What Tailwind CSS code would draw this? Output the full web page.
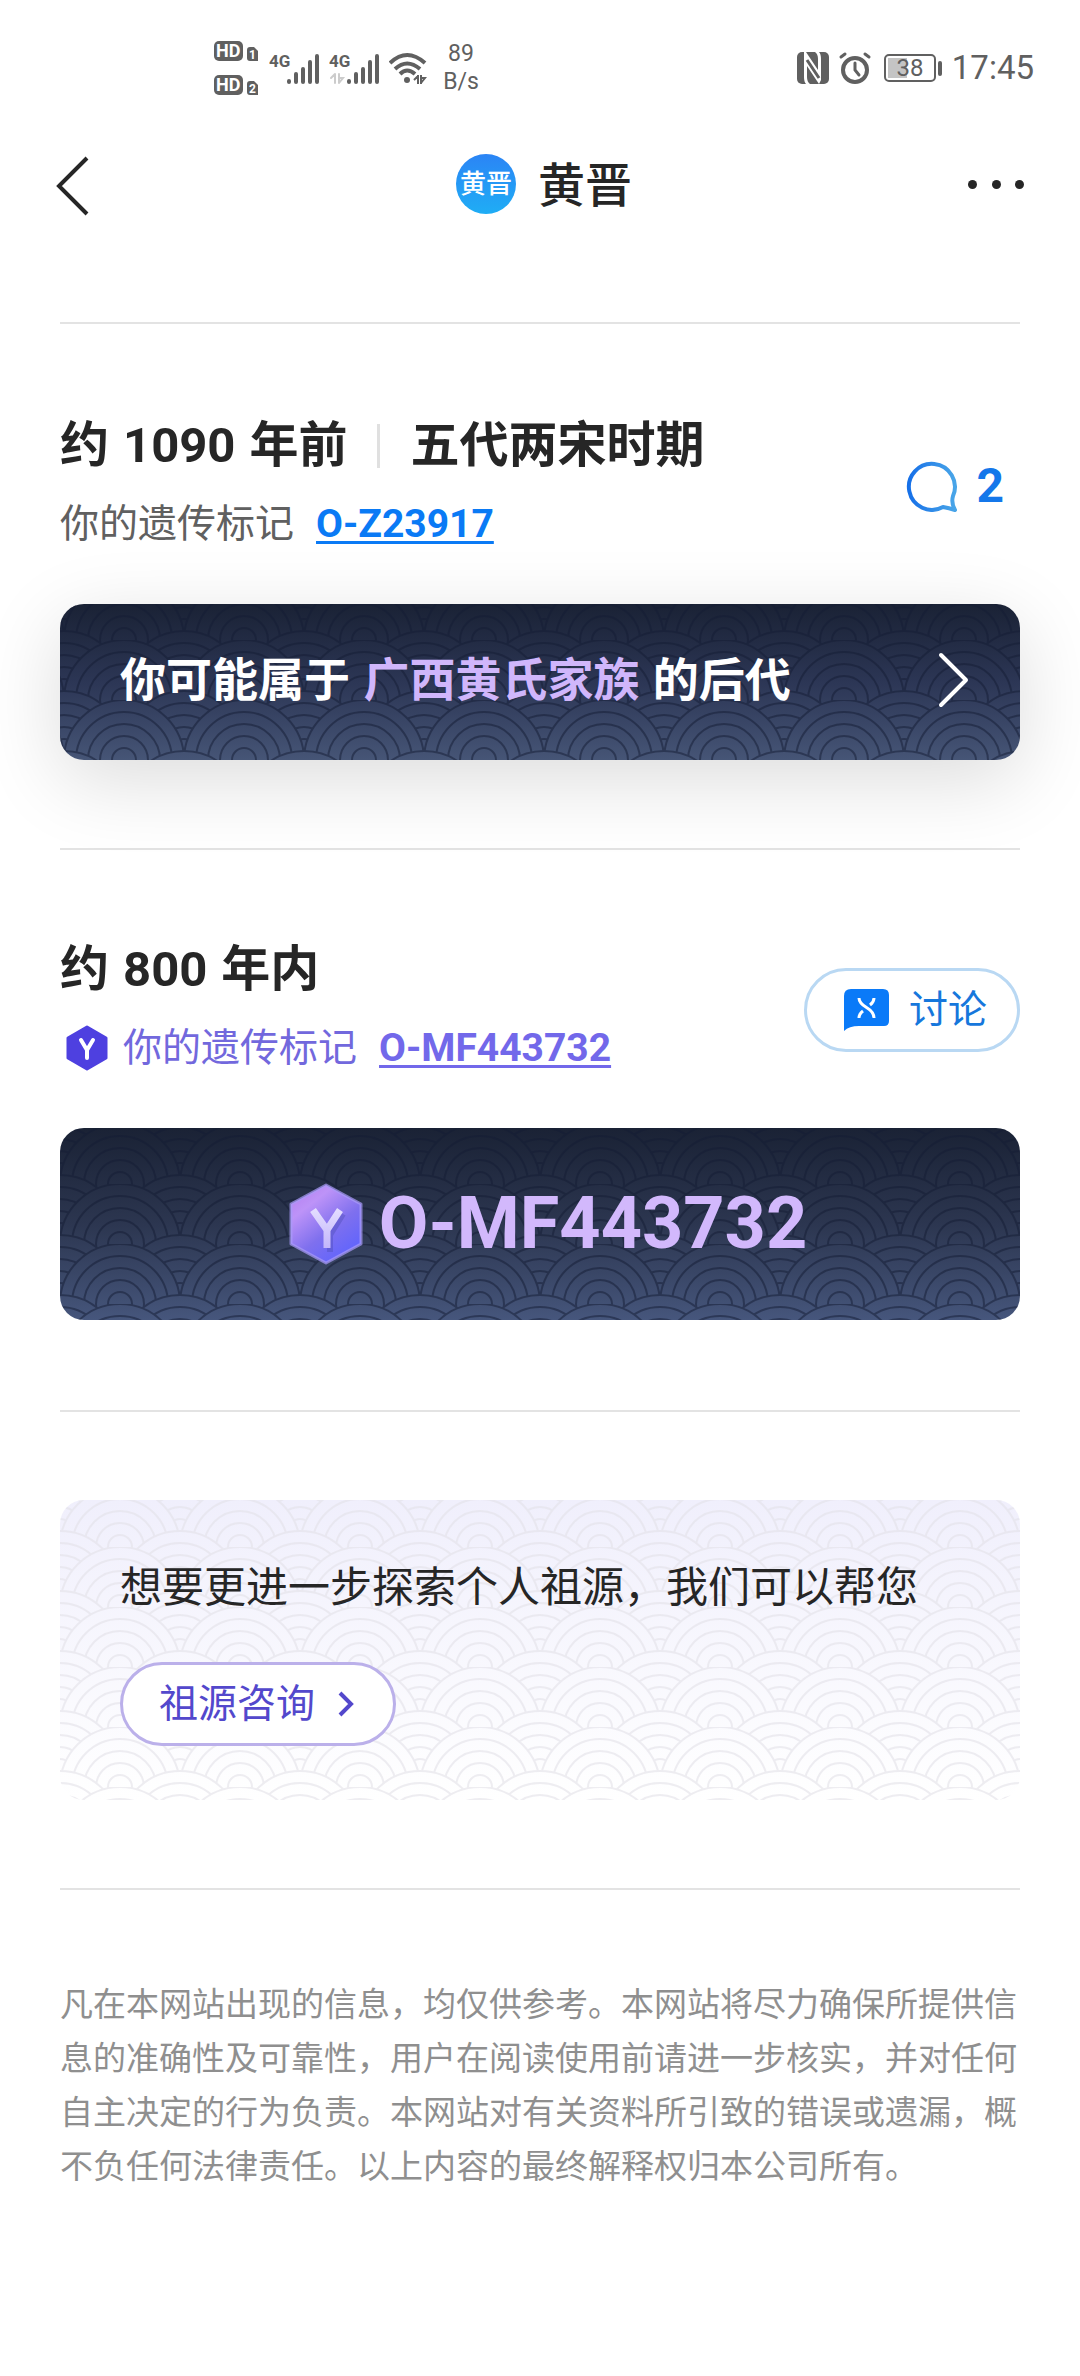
<!DOCTYPE html>
<html lang="zh-CN">
<head>
<meta charset="utf-8">
<meta name="viewport" content="width=device-width, initial-scale=1">
<title>黄晋</title>
<script src="https://cdn.jsdelivr.net/npm/@tailwindcss/browser@4"></script>
</head>
<body class="min-h-screen bg-white font-[Roboto,'Noto_Sans_CJK_SC',sans-serif] text-[#262626]">

<!-- Shared wave patterns and masks -->
<svg class="absolute size-0" aria-hidden="true">
  <defs>
    <g id="wave">
      <circle r="60"/><circle r="48"/><circle r="36"/><circle r="24"/><circle r="12"/>
    </g>
    <pattern id="wavesDark" width="120" height="60" patternUnits="userSpaceOnUse">
      <g fill="#000" stroke="#fff" stroke-width="2">
        <use href="#wave" x="60" y="-9"/>
        <use href="#wave" x="0" y="0"/><use href="#wave" x="120" y="0"/>
        <use href="#wave" x="60" y="51"/>
        <use href="#wave" x="0" y="60"/><use href="#wave" x="120" y="60"/>
        <use href="#wave" x="60" y="111"/>
      </g>
    </pattern>
    <pattern id="wavesLight" width="120" height="60" patternUnits="userSpaceOnUse">
      <g fill="#000" stroke="#fff" stroke-width="2">
        <use href="#wave" x="60" y="-16"/>
        <use href="#wave" x="0" y="0"/><use href="#wave" x="120" y="0"/>
        <use href="#wave" x="60" y="44"/>
        <use href="#wave" x="0" y="60"/><use href="#wave" x="120" y="60"/>
        <use href="#wave" x="60" y="104"/>
      </g>
    </pattern>
    <mask id="maskDark" maskUnits="userSpaceOnUse" x="-120" y="-60" width="4000" height="600"><rect x="-120" y="-60" width="4000" height="600" fill="url(#wavesDark)"/></mask>
    <mask id="maskLight" maskUnits="userSpaceOnUse" x="-120" y="-60" width="4000" height="600"><rect x="-120" y="-60" width="4000" height="600" fill="url(#wavesLight)"/></mask>
    <linearGradient id="bubble" x1="0" x2="1"><stop stop-color="#1670e8"/><stop offset="1" stop-color="#49a5e8"/></linearGradient>
    <linearGradient id="gem" x1="0.1" y1="0" x2="0.8" y2="1"><stop stop-color="#b57ff0"/><stop offset="0.25" stop-color="#bd93f8"/><stop offset="0.6" stop-color="#7f70ee"/><stop offset="1" stop-color="#5b62ff"/></linearGradient>
    <linearGradient id="gemY" x1="0" y1="0" x2="0" y2="1"><stop stop-color="#e3dcff"/><stop offset="1" stop-color="#c3b6fb"/></linearGradient>
  </defs>
</svg>

<!-- Status bar -->
<div class="flex h-[136px] items-center justify-between pl-[213px] pr-[46px] text-[#606060]">
  <div class="flex items-center gap-2">
    <svg class="h-[58px] w-[48px]" viewBox="0 0 48 58" fill="#606060" font-family="Roboto" font-weight="700">
      <rect x="1" y="2" width="29" height="20" rx="5"/><rect x="1" y="36" width="29" height="20" rx="5"/>
      <path d="M34 11q0-3 3-3h4l4 4v10H37q-3 0-3-3zM34 45q0-3 3-3h4l4 4v10H37q-3 0-3-3z"/>
      <g fill="#fff"><text x="3" y="18" font-size="18">HD</text><text x="3" y="52" font-size="18">HD</text><text x="36" y="20" font-size="12">1</text><text x="36" y="54" font-size="12">2</text></g>
    </svg>
    <svg class="h-[34px] w-[52px]" viewBox="0 0 52 34" fill="none" stroke="#606060" stroke-width="4" stroke-linecap="round">
      <path d="M20 30v1M27 23v8M34 18v13M41 11v20M48 5v26"/>
      <text x="0" y="16" font-size="17" font-family="Roboto" font-weight="700" fill="#606060" stroke="none">4G</text>
    </svg>
    <svg class="h-[34px] w-[52px]" viewBox="0 0 52 34" fill="none" stroke="#606060" stroke-width="4" stroke-linecap="round">
      <path d="M20 30v1M27 23v8M34 18v13M41 11v20M48 5v26"/>
      <path d="M6 23v9M2 27l4-4M10 23v9M10 32l4-5h-4" stroke="#ccc" stroke-width="2"/>
      <text x="0" y="16" font-size="17" font-family="Roboto" font-weight="700" fill="#606060" stroke="none">4G</text>
    </svg>
    <svg class="h-[34px] w-[38px]" viewBox="0 0 38 34" fill="none" stroke="#606060" stroke-width="4">
      <path d="M1 12Q18-4 36 12M6 18Q18 7 31 18M11 23Q18 16 26 23"/>
      <circle cx="18" cy="29" r="3" fill="#606060" stroke="none"/>
      <path d="M29 24v9M25 29l4-4M32 24v9M32 32l4-5h-4" stroke-width="2"/>
    </svg>
    <p class="w-[52px] text-center text-[23px] leading-[28px]">89<br>B/s</p>
  </div>
  <div class="flex items-center">
    <svg class="h-[32px] w-[32px]" viewBox="0 0 32 32" fill="#606060">
      <rect width="32" height="32" rx="5"/>
      <path d="M7 0L9 0L21 18V7Q21 2 18 0H22Q24 2 24 7V28L22 32L10 14V25Q10 30 13 32H9Q7 30 7 25z" fill="#fff"/>
      <path d="M10 8L22 26" stroke="#606060" stroke-width="3"/>
    </svg>
    <svg class="ml-[9px] h-[34px] w-[34px]" viewBox="0 0 34 34" fill="none" stroke="#606060" stroke-width="4" stroke-linecap="round">
      <circle cx="17" cy="19" r="12"/><path d="M17 12v7l4 5M3 6l4-3M31 6l-4-3" stroke-width="3"/>
    </svg>
    <svg class="ml-[12px] h-[28px] w-[60px]" viewBox="0 0 60 28" fill="none" stroke="#606060">
      <rect x="4" y="4" width="19" height="20" fill="#c4c4c4" stroke="none"/>
      <rect x="1" y="1" width="50" height="26" rx="4" stroke-width="2"/><rect x="54" y="7" width="4" height="15" rx="2" fill="#606060" stroke="none"/>
      <text x="26" y="22" text-anchor="middle" font-size="24" font-family="Roboto" fill="#606060" stroke="none">38</text>
    </svg>
    <span class="ml-[8px] text-[33px] leading-[40px]">17:45</span>
  </div>
</div>

<!-- Title bar -->
<header class="flex h-[96px] items-center justify-between px-[56px]">
  <button class="flex w-[64px] pt-1" aria-label="返回">
    <svg class="h-[60px] w-[34px]" viewBox="0 0 34 60" fill="none" stroke="#262626" stroke-width="4"><path d="M31 2L3 30L31 58"/></svg>
  </button>
  <div class="flex items-center gap-[22px]">
    <span class="flex size-[60px] items-center justify-center rounded-full bg-linear-to-b from-[#2b84f5] to-[#1fadf5] text-[26px] font-medium text-white">黄晋</span>
    <h1 class="pt-1 text-[47px] leading-[60px] font-medium">黄晋</h1>
  </div>
  <button class="flex w-[56px] justify-between" aria-label="更多">
    <span class="size-[9px] rounded-full bg-[#262626]"></span><span class="size-[9px] rounded-full bg-[#262626]"></span><span class="size-[9px] rounded-full bg-[#262626]"></span>
  </button>
</header>

<main class="px-[60px] pt-[90px] pb-[160px]">
  <!-- Around 1090 years ago -->
  <section class="border-t-2 border-[#e3e3e3] pt-[86px] pb-[88px]">
    <div class="flex items-center justify-between pr-[16px]">
      <div>
        <h2 class="flex items-center text-[49px] leading-[72px] font-bold">约<span class="mx-[14px]">1090</span>年前<span class="mx-[30px] h-[44px] w-[3px] bg-[#e0e0e0]"></span>五代两宋时期</h2>
        <p class="mt-1 text-[39px] leading-[76px] text-[#606060]">你的遗传标记<a href="#" class="ml-[22px] font-bold text-[#0a7af5] underline decoration-3 underline-offset-4">O-Z23917</a></p>
      </div>
      <button class="flex items-center gap-[18px] text-[48px] leading-[56px] font-bold text-[#1477ea]">
        <svg class="size-[52px]" viewBox="0 0 52 52" fill="none" stroke="url(#bubble)" stroke-width="4" stroke-linejoin="round"><path d="M37 47A23 23 0 1 1 47 36Q45 43 49 50Q43 48 37 47z"/></svg>2
      </button>
    </div>
    <a href="#" class="relative mt-[42px] flex h-[156px] items-center justify-between overflow-hidden rounded-3xl bg-linear-to-b from-[#1a2235] via-[#2c3655] to-[#465576] px-[60px] pb-1 shadow-[0_20px_80px_rgba(0,0,0,0.14)]">
      <svg class="absolute inset-0 size-full" aria-hidden="true"><g transform="translate(64 36)"><rect x="-120" y="-60" width="4000" height="600" fill="#141b33" fill-opacity="0.5" mask="url(#maskDark)"/></g></svg>
      <span class="relative text-[46px] leading-[60px] font-bold text-white">你可能属于 <span class="mx-[2px] text-[#d0b6fb]">广西黄氏家族</span> 的后代</span>
      <svg class="relative -mr-[10px] h-[56px] w-[32px]" viewBox="0 0 32 56" fill="none" stroke="#fff" stroke-width="4" stroke-linecap="round" stroke-linejoin="round"><path d="M3 3L28 28L3 53"/></svg>
    </a>
  </section>

  <!-- Within 800 years -->
  <section class="border-t-2 border-[#e3e3e3] pt-[84px] pb-[90px]">
    <div class="flex items-center justify-between">
      <div>
        <h2 class="flex items-center text-[49px] leading-[72px] font-bold">约<span class="mx-[14px]">800</span>年内</h2>
        <p class="mt-1 flex items-center text-[39px] leading-[76px] text-[#7268dd]">
          <svg class="mr-[15px] ml-[6px] h-[46px] w-[42px]" viewBox="0 0 42 46"><path d="M21 2L40 13V33L21 44L2 33V13z" fill="#4e40e0" stroke="#4e40e0" stroke-width="3" stroke-linejoin="round"/><path d="M15 15L21 25L27 15M21 25V33" fill="none" stroke="#fff" stroke-width="4" stroke-linecap="round"/></svg>
          你的遗传标记<a href="#" class="ml-[22px] font-bold text-[#7268ea] underline decoration-3 underline-offset-4">O-MF443732</a>
        </p>
      </div>
      <button class="flex h-[84px] items-center gap-[20px] rounded-full border-3 border-[#b9d8f3] pr-[30px] pl-[36px] text-[39px] leading-[56px] text-[#1677dc]">
        <svg class="h-[44px] w-[46px]" viewBox="0 0 46 44"><path d="M8 1H40Q46 1 46 7V33Q46 38 41 38H16Q6 38 1 43V8Q1 1 8 1z" fill="#0a7af8"/><path d="M16 10Q16 15 23.500 19.500T31 30M31 10Q31 14 27 17M16 30Q16 26 20 23" fill="none" stroke="#fff" stroke-width="3"/></svg>讨论
      </button>
    </div>
    <div class="relative mt-[42px] flex h-[192px] items-center justify-center gap-[16px] overflow-hidden rounded-3xl bg-linear-to-b from-[#1a2235] via-[#2c3650] to-[#46567c] pl-[16px]">
      <svg class="absolute inset-0 size-full" aria-hidden="true"><g transform="translate(60 56)"><rect x="-120" y="-60" width="4000" height="600" fill="#141b33" fill-opacity="0.5" mask="url(#maskDark)"/></g></svg>
      <svg class="relative h-[84px] w-[74px]" viewBox="0 0 74 84"><path d="M37 3L72 22V62L37 81L2 62V22z" fill="url(#gem)" stroke="#a99bfa" stroke-opacity="0.7" stroke-width="3" stroke-linejoin="round"/><path d="M26 31L39 51L52 30M39 50V68" transform="translate(2 2)" fill="none" stroke="#4c4bb5" stroke-opacity="0.4" stroke-width="6"/><path d="M24 28L38 48L51 28M38 46V66" fill="none" stroke="url(#gemY)" stroke-width="7"/></svg>
      <span class="relative text-[72px] leading-[88px] font-bold text-[#d2b8fc]">O-MF443732</span>
    </div>
  </section>

  <!-- Consultation -->
  <section class="border-t-2 border-[#e3e3e3] pt-[88px] pb-[88px]">
    <div class="relative h-[300px] overflow-hidden rounded-3xl bg-linear-to-b from-[#f0effc] to-white px-[60px] pt-[58px]">
      <svg class="absolute inset-0 size-full" aria-hidden="true"><g transform="translate(60 47)"><rect x="-120" y="-60" width="4000" height="600" fill="#e2e1e8" fill-opacity="0.6" mask="url(#maskLight)"/></g></svg>
      <p class="relative text-[42px] leading-[60px]">想要更进一步探索个人祖源，我们可以帮您</p>
      <button class="relative mt-[44px] flex h-[84px] items-center gap-[22px] rounded-full border-3 border-[#bbb0ea] bg-white pr-[38px] pl-[36px] text-[39px] leading-[56px] text-[#5348cc]">祖源咨询
        <svg class="h-[26px] w-[18px]" viewBox="0 0 18 26" fill="none" stroke="#5348cc" stroke-width="4"><path d="M3 2L14 13L3 24"/></svg>
      </button>
    </div>
  </section>

  <footer class="border-t-2 border-[#e3e3e3] pt-[88px]">
    <p class="text-[33px] leading-[54px] text-[#8f8f8f]">凡在本网站出现的信息，均仅供参考。本网站将尽力确保所提供信息的准确性及可靠性，用户在阅读使用前请进一步核实，并对任何自主决定的行为负责。本网站对有关资料所引致的错误或遗漏，概不负任何法律责任。以上内容的最终解释权归本公司所有。</p>
  </footer>
</main>
</body>
</html>
